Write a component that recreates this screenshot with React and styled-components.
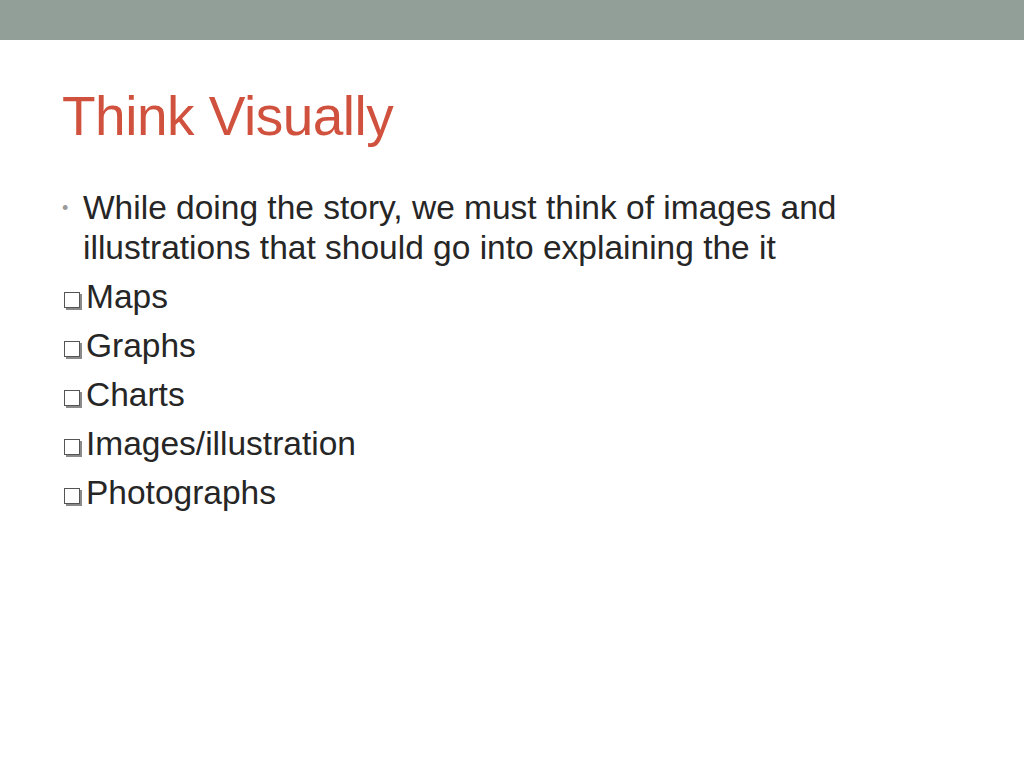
import styled, { createGlobalStyle } from 'styled-components';

const Global = createGlobalStyle`
  body { margin: 0; background: #fff; font-family: "Liberation Sans", Arial, sans-serif; }
`;

const TopBar = styled.div`
  height: 40px;
  background: #919f98;
`;

const Slide = styled.div`
  width: 1024px;
  height: 768px;
  overflow: hidden;
`;

const Body = styled.div`
  padding: 44px 0 0 62px;
`;

const Title = styled.h1`
  margin: 0;
  font-weight: normal;
  font-size: 55px;
  letter-spacing: -0.5px;
  color: #d0523e;
  line-height: 64px;
`;

const List = styled.div`
  margin-top: 40px;
  color: #262626;
  font-size: 33.5px;
`;

const Bullet = styled.div`
  display: flex;
  line-height: 40px;
  margin-bottom: 4px;
  & > span:first-child {
    width: 21px;
    flex: none;
    color: #9a9a9a;
    font-size: 18px;
  }
`;

const Item = styled.div`
  display: flex;
  align-items: center;
  height: 49px;
`;

const Box = styled.span`
  width: 14px;
  height: 14px;
  margin: 6px 6px 0 2px;
  border: 1px solid #555;
  background: #fff;
  box-shadow: 2px 2px 0 #8a8a8a;
  flex: none;
`;

const items = ['Maps', 'Graphs', 'Charts', 'Images/illustration', 'Photographs'];

export default function App() {
  return (
    <Slide>
      <Global />
      <TopBar />
      <Body>
        <Title>Think Visually</Title>
        <List>
          <Bullet>
            <span>•</span>
            <span>
              While doing the story, we must think of images and
              <br />
              illustrations that should go into explaining the it
            </span>
          </Bullet>
          {items.map((t) => (
            <Item key={t}>
              <Box />
              {t}
            </Item>
          ))}
        </List>
      </Body>
    </Slide>
  );
}
